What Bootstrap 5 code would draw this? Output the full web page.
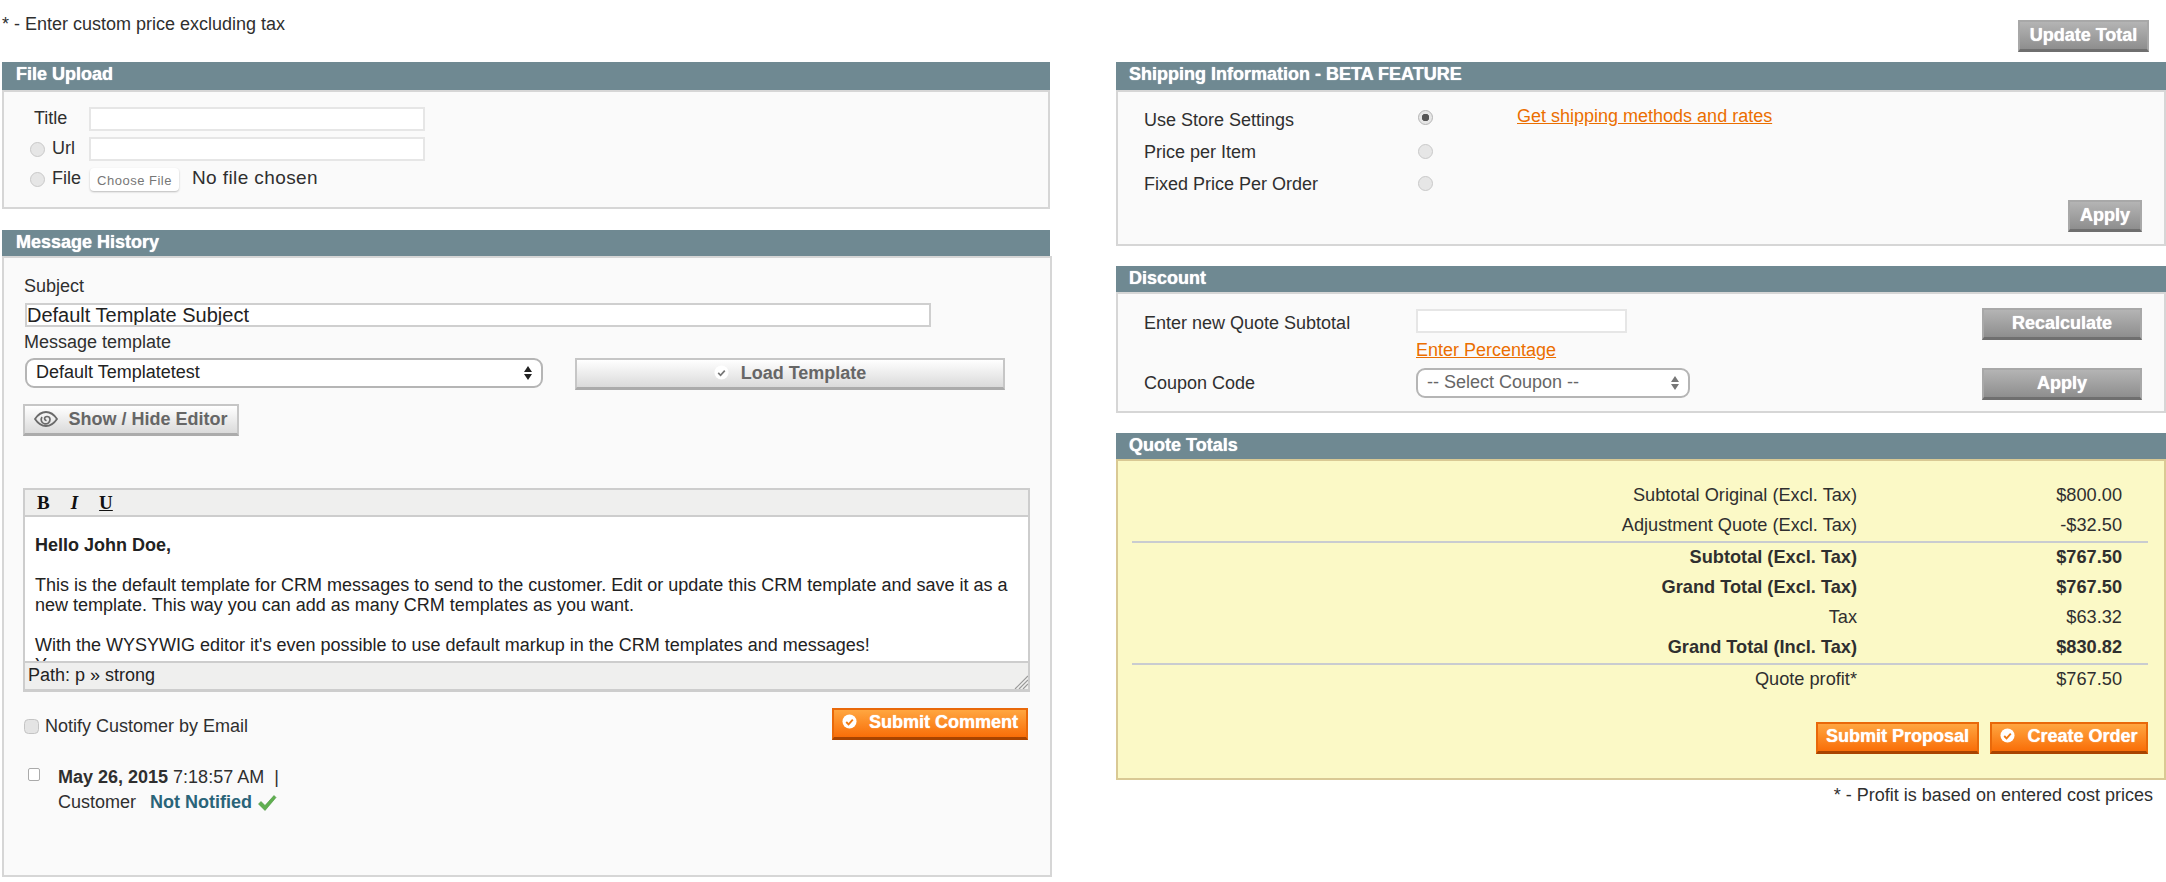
<!DOCTYPE html>
<html lang="en">
<head>
<meta charset="utf-8">
<title>Quote</title>
<link href="https://cdn.jsdelivr.net/npm/bootstrap@5.3.0/dist/css/bootstrap.min.css" rel="stylesheet">
<style>
html,body{height:882px;overflow:hidden}
body{background:#fff;color:#2f2f2f;font:18px/20px "Liberation Sans",Arial,sans-serif}
.page{width:2166px;height:882px;padding-left:2px;overflow:hidden}
.topbar{height:62px;padding:14px 17px 0 0}
.updatewrap{padding-top:6px}
.cols{gap:66px}
.colleft{width:1048px}
.colright{width:1050px}
.phead{background:#6f8992;color:#fff;font-weight:700;font-size:18px;line-height:24px;padding-left:14px;text-shadow:0 0 1px #fff;height:26px}
.phead.tall{height:28px}
.colright .phead{padding-left:13px}
.pbody{background:#fafafa;border:2px solid #d6d6d6}
.gapb{margin-bottom:21px}
.upload{padding:15px 0 16px 26px}
.upload .urow{height:24px;margin-bottom:6px}
.upload .urow:last-child{margin-bottom:0}
.ulabel{width:59px;flex:none;padding-left:4px;padding-bottom:2px}
.ulabel.tight{padding-left:0}
.ulabel .rad{margin-top:2px}
.plain{height:24px;border:2px solid #e6e6e6;background:#fff;width:336px;border-radius:0;padding:0}
.rad{width:15px;height:15px;margin:0 7px 0 0;background:#e6e6e6;border:1px solid #c9c9c9;flex:none}
.rad:checked{background:#e6e6e6 radial-gradient(circle,#555 0 3.5px,transparent 4px);border-color:#b5b5b5}
.rad:focus{box-shadow:none;border-color:#c9c9c9}
.choose{width:89px;height:23px;background:#fff;border:0;border-radius:4px;box-shadow:0 1px 2px #bbb;color:#777;font-size:13px;letter-spacing:.5px;padding:3px 0 0;line-height:20px;margin:1px 13px 0 1px}
.nofile{letter-spacing:.4px;font-size:19px;padding-bottom:2px}
.msg{padding:18px 0 60px 20px;margin-right:-2px}
.subject{width:906px;height:24px;border:2px solid #cfcfcf;background:#fff;border-radius:0;padding:0;margin:7px 0 5px 1px;font-size:20px;color:#222;line-height:20px;display:block}
.selfield{height:30px;padding:0 0 2px 9px;border:2px solid #b5b5b5;border-radius:9px;background-color:#fff;background-size:10px 16px;background-position:right 8px center;font-size:18px;line-height:24px;color:#222}
.selfield.one{width:518px;background-image:url("data:image/svg+xml,%3Csvg xmlns='http://www.w3.org/2000/svg' viewBox='0 0 10 16'%3E%3Cpath d='M5 1 9 7H1zM5 15 1 9h8z' fill='%23222'/%3E%3C/svg%3E")}
.selfield.two{width:274px;color:#666;margin-bottom:2px;background-image:url("data:image/svg+xml,%3Csvg xmlns='http://www.w3.org/2000/svg' viewBox='0 0 10 16'%3E%3Cpath d='M5 1 9 7H1zM5 15 1 9h8z' fill='%23777'/%3E%3C/svg%3E")}
.skin{height:32px;border-radius:0;font-weight:700;font-size:18px;line-height:24px;padding:0 0 2px;display:inline-flex;align-items:center;justify-content:center;border-style:solid;border-width:2px 2px 3px}
.skin-gray,.skin-gray:hover{background:linear-gradient(#b4b4b4,#8e8e8e);border-color:#a8a8a8 #a8a8a8 #6f6f6f;color:#fff;text-shadow:0 0 1px #fff}
.skin-orange,.skin-orange:hover{background:linear-gradient(#ffa640,#f96e08);border-color:#e9690a #e9690a #a84400;color:#fff;text-shadow:0 0 1px #fff;padding-bottom:4px}
.skin-light,.skin-light:hover{background:linear-gradient(#fff,#dadada);border-color:#c6c6c6 #c6c6c6 #ababab;color:#666}
.w-update{width:131px}
.w-load{width:430px}
.w-show{width:216px}
.w-submit{width:196px}
.w-apply{width:74px}
.w-wide{width:160px}
.w-prop{width:163px}
.w-create{width:158px}
.loadrow{gap:32px;margin:6px 0 0 1px}
.showrow{margin:14px 0 0 -1px}
.editor{width:1007px;margin:52px 0 0 -1px;border:2px solid #cdcdcd;border-bottom-width:3px;background:#fff}
.etool{height:27px;background:#efefee;border-bottom:2px solid #cdcdcd;font-family:"Liberation Serif",serif;font-weight:700;font-size:19px;line-height:25px;padding-left:12px;gap:21px;color:#111}
.etext{height:144px;overflow:hidden;padding:18px 13px 0 10px;color:#222;font-size:18px;line-height:20px}
.etext p{margin:0 0 20px}
.epath{height:28px;background:#efefee;border-top:2px solid #cdcdcd;padding-left:3px;color:#222;line-height:25px;position:relative}
.grip{position:absolute;right:0;bottom:0}
.notify{margin:16px 22px 0 0;height:32px}
.notify label{padding-top:3px}
.chk{width:15px;height:15px;margin:2px 6px 0 0;background:#e4e4e4;border:1px solid #c4c4c4;border-radius:3px;flex:none}
.chk:focus{box-shadow:none;border-color:#c4c4c4}
.hist{margin:25px 0 0 4px;line-height:25px}
.hist .chk{width:12px;height:13px;margin:3px 18px 0 0;background:#fff;border:1px solid #aaa;border-radius:2px}
.notnot{color:#2a6479;font-weight:700;margin-left:9px}
.ship{display:grid;grid-template-columns:274px 99px 1fr;grid-auto-rows:32px;padding:12px 22px 12px 26px;align-items:center}
.linkorange{color:#eb6e00;text-decoration:underline}
.lift8{margin-bottom:8px}
.lift6{margin-bottom:6px}
.lift2{margin-bottom:2px}
.lift4{margin-bottom:4px}
.lift3{margin-bottom:3px}
.applyrow{grid-column:1/-1}
.disc{display:grid;grid-template-columns:272px 1fr auto;grid-template-rows:32px 28px 32px;padding:14px 22px 11px 26px;align-items:center}
.plain.short{width:211px;margin-bottom:6px}
.shipheadgap{margin-bottom:20px}
.totals{background:#fbf9c6;border-color:#d9c994;padding:19px 16px 24px 14px;font-size:18.2px}
.trow{height:30px;line-height:30px}
.tlabel{width:725px;text-align:right}
.tval{width:265px;text-align:right}
.tline{height:2px;background:#c9ccd0;margin:1px 0 -1px}
.tbtns{margin-top:28px;gap:11px}
.footnote{margin-top:5px;padding-right:13px}
.ico{flex:none;margin-right:12px}
.ico.eye{margin-right:10px}
</style>
</head>
<body>
<div class="page">
  <div class="topbar d-flex justify-content-between align-items-start">
    <div>* - Enter custom price excluding tax</div>
    <div class="updatewrap"><button type="button" class="btn skin skin-gray w-update">Update Total</button></div>
  </div>
  <div class="d-flex cols">
    <div class="colleft">
      <section class="gapb">
        <div class="phead tall">File Upload</div>
        <div class="pbody upload">
          <div class="d-flex align-items-center urow"><span class="ulabel">Title</span><input class="plain form-control" type="text"></div>
          <div class="d-flex align-items-center urow"><span class="ulabel tight d-flex align-items-center"><input class="form-check-input rad" type="radio" name="src">Url</span><input class="plain form-control" type="text"></div>
          <div class="d-flex align-items-center urow"><span class="ulabel tight d-flex align-items-center"><input class="form-check-input rad" type="radio" name="src">File</span><button type="button" class="choose">Choose File</button><span class="nofile">No file chosen</span></div>
        </div>
      </section>
      <section>
        <div class="phead">Message History</div>
        <div class="pbody msg">
          <div>Subject</div>
          <input class="subject form-control" type="text" value="Default Template Subject">
          <div>Message template</div>
          <div class="d-flex loadrow">
            <select class="form-select selfield one"><option>Default Templatetest</option></select>
            <button type="button" class="btn skin skin-light w-load">
              <svg class="ico" width="15" height="15" viewBox="0 0 16 16"><circle cx="8" cy="8" r="7.5" fill="#fff"/><path d="M4.5 8.5 7 11l4.5-5" fill="none" stroke="#777" stroke-width="1.8"/></svg>Load Template</button>
          </div>
          <div class="showrow">
            <button type="button" class="btn skin skin-light w-show">
              <svg class="ico eye" width="24" height="16" viewBox="0 0 24 16"><path d="M1 8C5 2 9 1 12 1s7 1 11 7c-4 6-8 7-11 7S5 14 1 8Z" fill="none" stroke="#6a6a6a" stroke-width="1.8"/><path d="M8 6a4.4 4.4 0 1 0 8 2.5c0-2-1.500-3-3-3s-2.500 1-2.400 2.300c.1 1.200 1.100 1.700 1.900 1.400" fill="none" stroke="#6a6a6a" stroke-width="1.700"/></svg>Show / Hide Editor</button>
          </div>
          <div class="editor">
            <div class="etool d-flex"><span>B</span><i>I</i><u>U</u></div>
            <div class="etext">
              <p><strong>Hello John Doe,</strong></p>
              <p>This is the default template for CRM messages to send to the customer. Edit or update this CRM template and save it as a new template. This way you can add as many CRM templates as you want.</p>
              <p>With the WYSYWIG editor it's even possible to use default markup in the CRM templates and messages!<br>You</p>
            </div>
            <div class="epath">Path: p » strong
              <svg class="grip" width="14" height="14" viewBox="0 0 14 14"><path d="M14 1 1 14M14 5 5 14M14 9 9 14" stroke="#999" stroke-width="1.200"/></svg>
            </div>
          </div>
          <div class="d-flex justify-content-between align-items-center notify">
            <label class="d-flex align-items-center"><input class="form-check-input chk" type="checkbox">Notify Customer by Email</label>
            <button type="button" class="btn skin skin-orange w-submit">
              <svg class="ico" width="15" height="15" viewBox="0 0 16 16"><circle cx="8" cy="8" r="7.500" fill="#fff"/><path d="M4.500 8.500 7 11l4.500-5" fill="none" stroke="#f07a12" stroke-width="2"/></svg>Submit Comment</button>
          </div>
          <div class="d-flex hist">
            <input class="form-check-input chk" type="checkbox">
            <div><strong>May 26, 2015</strong> 7:18:57 AM &nbsp;|<br>Customer <span class="notnot">Not Notified</span>
              <svg width="20" height="18" viewBox="0 0 20 18" class="align-middle"><path d="M1.500 10 4 7.500l4 4L17 1.500l2 2L8 16.500Z" fill="#5fb04f" stroke="#46913a" stroke-width=".6"/></svg>
            </div>
          </div>
        </div>
      </section>
    </div>
    <div class="colright">
      <section class="shipheadgap">
        <div class="phead tall">Shipping Information - BETA FEATURE</div>
        <div class="pbody ship">
          <span>Use Store Settings</span><span class="d-flex lift6"><input class="form-check-input rad m-0" type="radio" name="sh" checked></span><a class="linkorange lift8" href="#">Get shipping methods and rates</a>
          <span>Price per Item</span><span class="d-flex lift2"><input class="form-check-input rad m-0" type="radio" name="sh"></span><span></span>
          <span>Fixed Price Per Order</span><span class="d-flex lift2"><input class="form-check-input rad m-0" type="radio" name="sh"></span><span></span>
          <div class="applyrow d-flex justify-content-end"><button type="button" class="btn skin skin-gray w-apply">Apply</button></div>
        </div>
      </section>
      <section class="shipheadgap">
        <div class="phead">Discount</div>
        <div class="pbody disc">
          <span class="lift3">Enter new Quote Subtotal</span><input class="plain short form-control" type="text"><button type="button" class="btn skin skin-gray w-wide">Recalculate</button>
          <span></span><a class="linkorange lift8" href="#">Enter Percentage</a><span></span>
          <span class="lift2">Coupon Code</span><select class="form-select selfield two"><option>-- Select Coupon --</option></select><button type="button" class="btn skin skin-gray w-wide">Apply</button>
        </div>
      </section>
      <section>
        <div class="phead">Quote Totals</div>
        <div class="pbody totals">
          <div class="d-flex trow"><div class="tlabel">Subtotal Original (Excl. Tax)</div><div class="tval">$800.00</div></div>
          <div class="d-flex trow"><div class="tlabel">Adjustment Quote (Excl. Tax)</div><div class="tval">-$32.50</div></div>
          <div class="tline"></div>
          <div class="d-flex trow fw-bold"><div class="tlabel">Subtotal (Excl. Tax)</div><div class="tval">$767.50</div></div>
          <div class="d-flex trow fw-bold"><div class="tlabel">Grand Total (Excl. Tax)</div><div class="tval">$767.50</div></div>
          <div class="d-flex trow"><div class="tlabel">Tax</div><div class="tval">$63.32</div></div>
          <div class="d-flex trow fw-bold"><div class="tlabel">Grand Total (Incl. Tax)</div><div class="tval">$830.82</div></div>
          <div class="tline"></div>
          <div class="d-flex trow"><div class="tlabel">Quote profit*</div><div class="tval">$767.50</div></div>
          <div class="d-flex justify-content-end tbtns">
            <button type="button" class="btn skin skin-orange w-prop">Submit Proposal</button>
            <button type="button" class="btn skin skin-orange w-create">
              <svg class="ico" width="15" height="15" viewBox="0 0 16 16"><circle cx="8" cy="8" r="7.500" fill="#fff"/><path d="M4.500 8.500 7 11l4.500-5" fill="none" stroke="#f07a12" stroke-width="2"/></svg>Create Order</button>
          </div>
        </div>
        <div class="text-end footnote">* - Profit is based on entered cost prices</div>
      </section>
    </div>
  </div>
</div>
<script src="https://cdn.jsdelivr.net/npm/bootstrap@5.3.0/dist/js/bootstrap.bundle.min.js"></script>
</body>
</html>
